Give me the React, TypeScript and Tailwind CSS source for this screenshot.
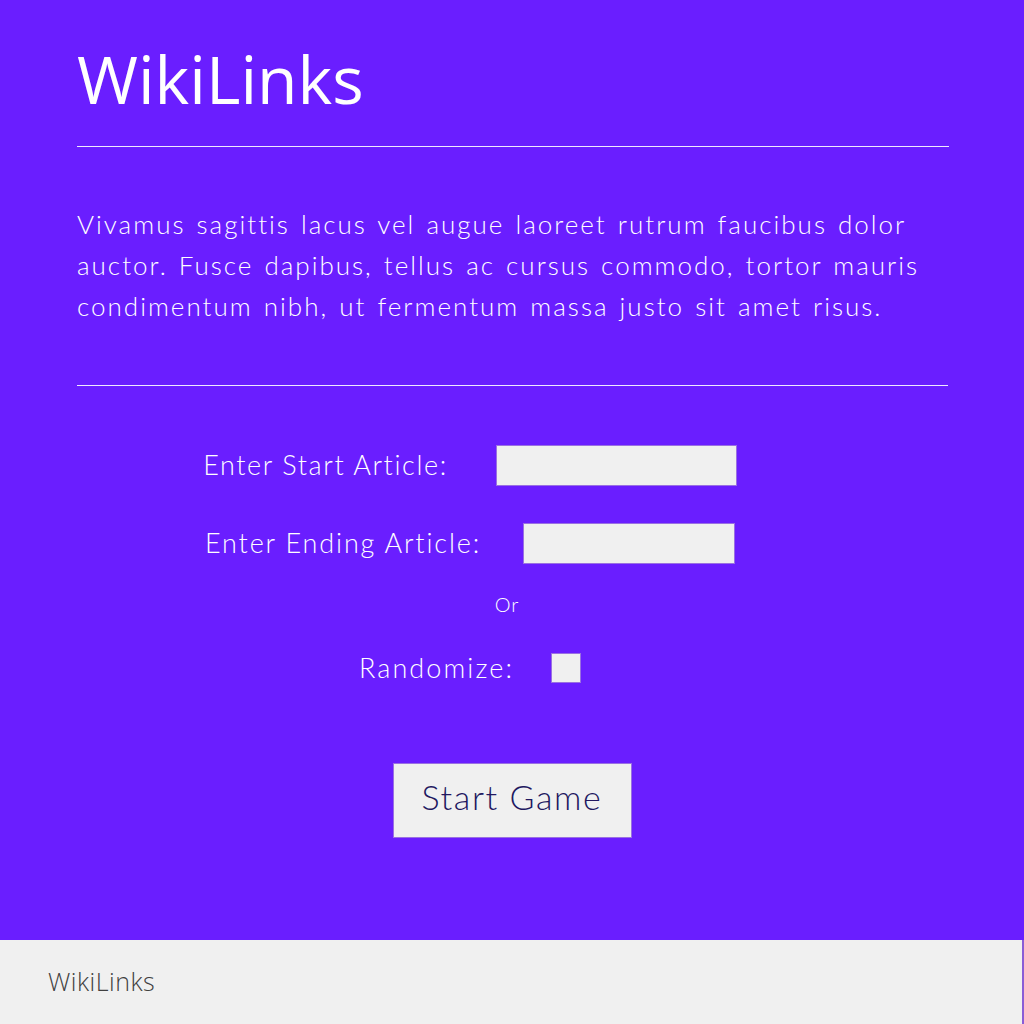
import React from 'react';

const avenir = { fontFamily: 'Lato, "Noto Sans", sans-serif' };

export default function App() {
    return (
        <div className="w-[1024px] h-[1024px] flex flex-col bg-[#6a1eff]">
            <main className="h-[940px] px-[77px] text-white" style={avenir}>
                <h1 className="pt-[36px] pb-[26px] text-[66px] leading-[84px] font-normal" style={{ fontFamily: '"Open Sans", sans-serif' }}>
                    WikiLinks
                </h1>
                <div className="h-px w-[872px] bg-white/90" />

                <p className="mt-[57px] text-[26px] leading-[41px] font-light tracking-[2px] [word-spacing:2px]">
                    Vivamus sagittis lacus vel augue laoreet rutrum faucibus dolor<br />
                    auctor. Fusce dapibus, tellus ac cursus commodo, tortor mauris<br />
                    condimentum nibh, ut fermentum massa justo sit amet risus.
                </p>

                <div className="mt-[58px] h-px w-[871px] bg-white/90" />

                {/* form */}
                <div className="mt-[59px] pr-[84px] flex flex-col items-center">
                    <div className="flex items-center gap-[48px]">
                        <label className="text-[27px] font-light tracking-[1.6px]">Enter Start Article:</label>
                        <input className="w-[241px] h-[41px] bg-[#f0f0f0] border border-[#9a70e2] outline-none" />
                    </div>
                    <div className="mt-[37px] flex items-center gap-[42px]">
                        <label className="text-[27px] font-light tracking-[1.85px]">Enter Ending Article:</label>
                        <input className="w-[212px] h-[41px] bg-[#f0f0f0] border border-[#9a70e2] outline-none" />
                    </div>
                    <div className="mt-[25px] pl-[74px] text-[20px] font-light tracking-[1px]">Or</div>
                    <div className="mt-[29px] flex items-center gap-[37px]">
                        <label className="text-[27px] font-light tracking-[2.1px]">Randomize:</label>
                        <span className="w-[30px] h-[30px] bg-[#f0f0f0] border border-[#9a70e2]" />
                    </div>
                </div>

                <div className="mt-[74px] flex justify-center">
                    <button className="w-[239px] h-[75px] pb-[8px] bg-[#f0f0f0] border border-[#9a70e2] text-[34px] text-[#221860] font-light tracking-[1.6px]">
                        Start Game
                    </button>
                </div>
            </main>

            <footer className="h-[84px] flex items-center pl-[48px] bg-[#f0f0f0] border-r-2 border-[#8b5cd6]">
                <span className="text-[25px] text-[#404040] tracking-[0.5px]" style={{ fontFamily: '"Open Sans", sans-serif', fontWeight: 300 }}>
                    WikiLinks
                </span>
            </footer>
        </div>
    );
}
